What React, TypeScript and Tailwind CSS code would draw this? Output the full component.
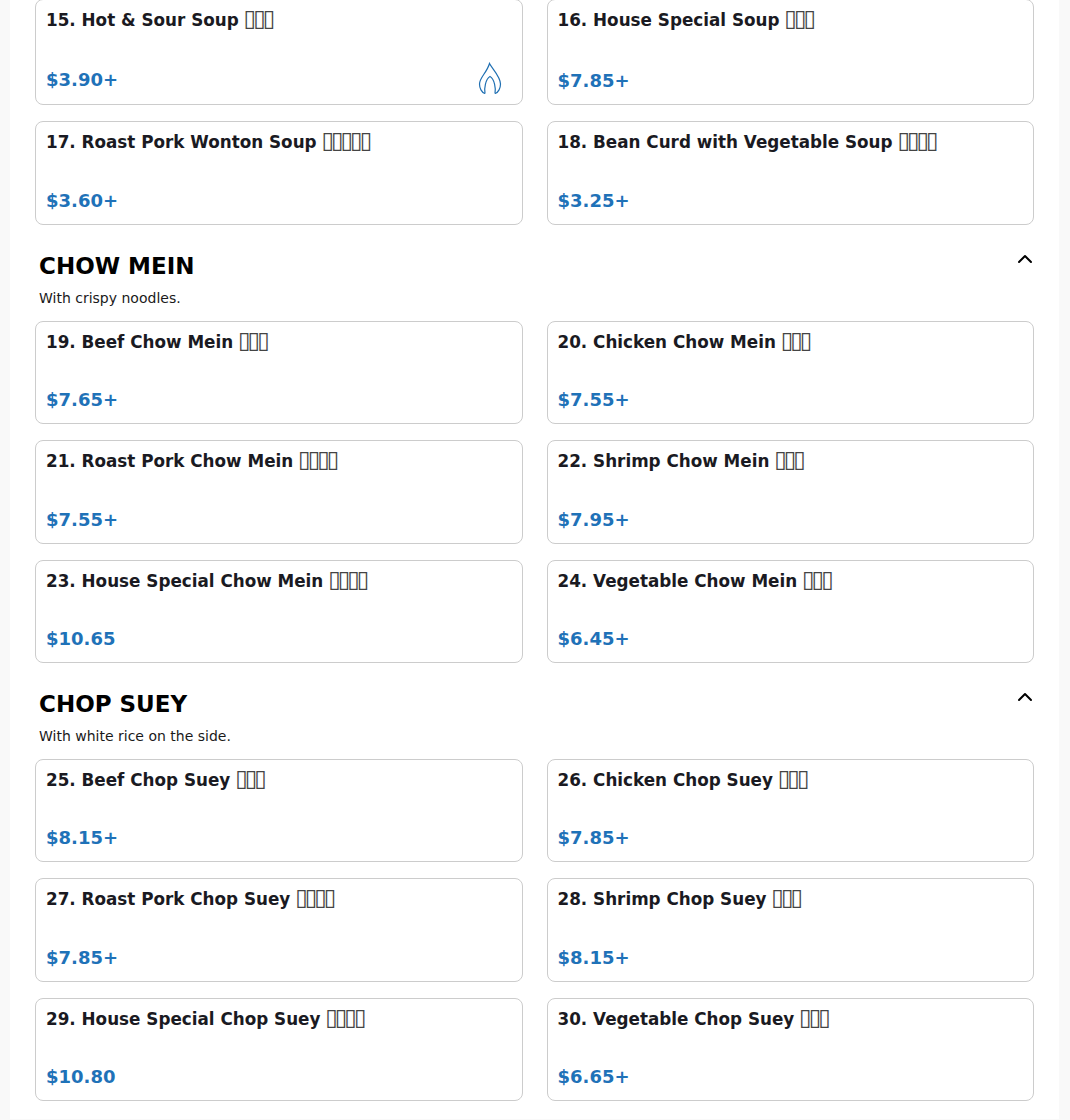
import { ChevronUp } from 'lucide-react';

type Item = { name: string; zh: string; price: string; spicy?: boolean };

const BOX3 = '\u25AF\u25AF\u25AF';
const BOX4 = '\u25AF\u25AF\u25AF\u25AF';
const BOX5 = '\u25AF\u25AF\u25AF\u25AF\u25AF';

const SOUPS: Item[] = [
  { name: '15. Hot & Sour Soup', zh: BOX3, price: '$3.90+', spicy: true },
  { name: '16. House Special Soup', zh: BOX3, price: '$7.85+' },
  { name: '17. Roast Pork Wonton Soup', zh: BOX5, price: '$3.60+' },
  { name: '18. Bean Curd with Vegetable Soup', zh: BOX4, price: '$3.25+' },
];

const CHOW_MEIN: Item[] = [
  { name: '19. Beef Chow Mein', zh: BOX3, price: '$7.65+' },
  { name: '20. Chicken Chow Mein', zh: BOX3, price: '$7.55+' },
  { name: '21. Roast Pork Chow Mein', zh: BOX4, price: '$7.55+' },
  { name: '22. Shrimp Chow Mein', zh: BOX3, price: '$7.95+' },
  { name: '23. House Special Chow Mein', zh: BOX4, price: '$10.65' },
  { name: '24. Vegetable Chow Mein', zh: BOX3, price: '$6.45+' },
];

const CHOP_SUEY: Item[] = [
  { name: '25. Beef Chop Suey', zh: BOX3, price: '$8.15+' },
  { name: '26. Chicken Chop Suey', zh: BOX3, price: '$7.85+' },
  { name: '27. Roast Pork Chop Suey', zh: BOX4, price: '$7.85+' },
  { name: '28. Shrimp Chop Suey', zh: BOX3, price: '$8.15+' },
  { name: '29. House Special Chop Suey', zh: BOX4, price: '$10.80' },
  { name: '30. Vegetable Chop Suey', zh: BOX3, price: '$6.65+' },
];

function Flame() {
  return (
    <svg viewBox="0 0 24 32" className="h-8 w-6 text-[#1f6fb2]" fill="none" stroke="currentColor" strokeWidth="1.2">
      <path d="M7 31.500C3.500 30.500 1.500 26 1.500 22C1.500 15.500 9 10.500 11.500 1.500C14 6.500 22.500 14.500 22.500 22C22.500 26 20.500 30.500 17 31.500" />
      <path d="M7 31.500C6 26.500 7.500 17 12 14.500C16.500 17 18 26.500 17 31.500" />
    </svg>
  );
}

function Card({ item }: { item: Item }) {
  return (
    <div className="flex min-h-[103.33px] flex-col rounded-lg border border-[#ccc] bg-white px-[10px] pt-[7px] pb-[10px]">
      <h3 className="mb-auto h-[57px] text-[16.8px] leading-[27px] font-bold text-[#1a1a22]">
        {item.name}{' '}
        <span className="-ml-px text-[23px] leading-none font-normal tracking-[-3.1px] text-[#444]">{item.zh}</span>
      </h3>
      <div className="flex items-center justify-between">
        <span className="text-lg leading-[27px] font-bold text-[#1f72b8]">{item.price}</span>
        {item.spicy && (
          <span className="mr-[10px] -mt-[1.67px]">
            <Flame />
          </span>
        )}
      </div>
    </div>
  );
}

function Grid({ items }: { items: Item[] }) {
  return (
    <div className="grid grid-cols-2 gap-x-6 gap-y-4">
      {items.map((item) => (
        <Card key={item.name} item={item} />
      ))}
    </div>
  );
}

function Section({ title, note, items }: { title: string; note: string; items: Item[] }) {
  return (
    <section className="mt-[25px]">
      <div className="flex items-start justify-between pl-1">
        <h2 className="text-[23px] leading-8 font-bold text-black">{title}</h2>
        <ChevronUp className="-mt-[3px] -mr-[3px] h-6 w-6 text-black" />
      </div>
      <p className="mt-[6px] mb-[13px] px-1 text-sm text-[#1a1a1a]">{note}</p>
      <Grid items={items} />
    </section>
  );
}

export default function App() {
  return (
    <div className="h-[1120px] overflow-hidden bg-[#f9f9f9] font-['DejaVu_Sans',sans-serif]">
      <main className="mr-[11px] ml-[10px] h-full bg-white px-[25px]">
        <div className="-mt-px pb-[0.33px]">
          <Grid items={SOUPS} />
        </div>
        <Section title="CHOW MEIN" note="With crispy noodles." items={CHOW_MEIN} />
        <Section title="CHOP SUEY" note="With white rice on the side." items={CHOP_SUEY} />
      </main>
    </div>
  );
}
